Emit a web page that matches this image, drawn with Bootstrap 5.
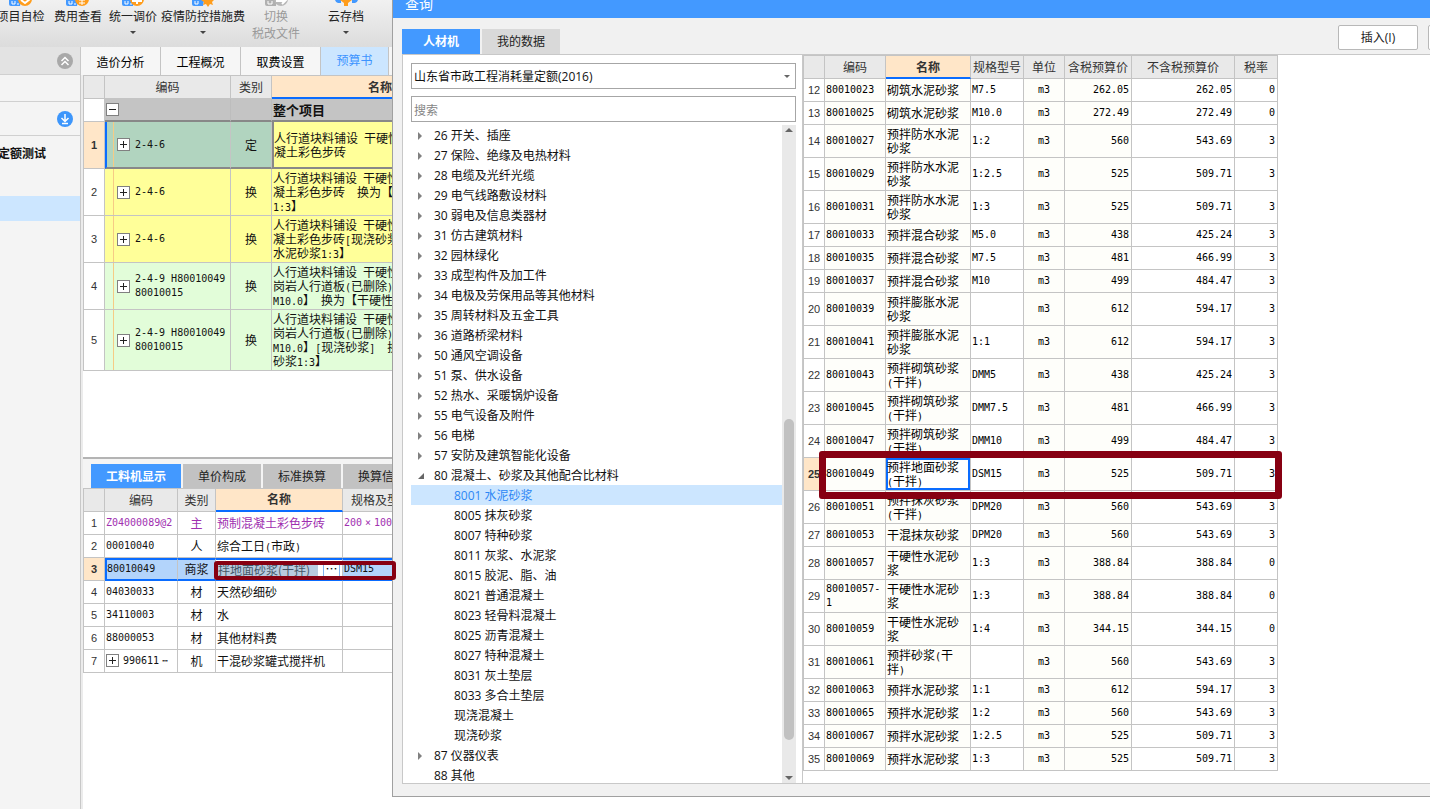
<!DOCTYPE html>
<html lang="zh-CN">
<head>
<meta charset="utf-8">
<meta name="viewport" content="width=device-width, initial-scale=1">
<title>查询</title>
<link rel="stylesheet" href="https://cdn.jsdelivr.net/npm/bootstrap@5.3.0/dist/css/bootstrap.min.css">
<style>
:root{--blue:#4399ff;--line:#c4c4c4;--strong:#0a6cff;--mark:#870012;--peach:#ffe6c8}
body{font-family:"Open Sans","Noto Sans CJK SC",sans-serif;font-size:12px;line-height:18px;color:#111;background:#fff}
button,input,select{font-family:inherit}
a{color:inherit;text-decoration:none}
.grid-table{font-family:"Noto Sans CJK SC",sans-serif}
.mo{font-family:"DejaVu Sans Mono",monospace;font-size:10px;line-height:10px}
.times{display:inline-block;width:12px;text-align:center}

/* ribbon */
.ribbon{height:47px;background:linear-gradient(#f1f1f1,#dcdcdc);overflow:hidden}
.ribbon-items{display:grid;grid-template-columns:57px 58px 52px 88px 58px 82px 54px;margin-left:-8px}
.tool{border:0;background:none;padding:0;font-size:12px;line-height:17px;white-space:nowrap;color:#222;display:flex;flex-direction:column;align-items:center}
.tool:disabled{color:#9a9a9a}
.tool svg:first-child{margin-bottom:1px}
.tool .drop{margin-top:6px}

/* left side bar */
.side{width:81px;flex:none;background:#f4f4f4;border-right:1px solid #c8c8c8}
.side-row{height:27px;border-bottom:1px solid #d0d0d0;padding-right:7px}
.side-row.head{background:#e3e3e3;height:28px}
.side-row.tall{height:34px}
.side-name{height:60px;padding-top:9px;font-weight:700;overflow:hidden;white-space:nowrap;margin-left:-2px}
.side-pick{height:25px;background:#cce6ff}

/* main area of the project window */
.main-area{background:#ececec;padding-left:2px}
.page-tabs{height:28px;background:#f6f6f6;margin-left:-2px}
.page-tabs button{border:0;border-right:1px solid #c4c4c4;background:#f6f6f6;width:80px;padding:4px 0 0;font-size:12px}
.page-tabs button.on{background:#cce6ff;color:#3c94ff;width:68px;padding:0}
.pane-top{flex:12 1 0;min-height:0;background:#fff;overflow:hidden}
.pane-low{flex:11 1 0;min-height:0;background:#fff;border-top:2px solid #b4b4b4}
.low-tabs{background:#f4f4f4;padding:5px 0 0 8px;height:29px;gap:2px}
.low-tabs button{border:0;background:#c2c2c2;color:#222;width:78px;height:24px;font-size:12px;padding:2px 0 0;white-space:nowrap}
.low-tabs button.on{background:var(--blue);color:#fff;font-weight:700;width:90px}

/* grids */
.grid-table{border-collapse:separate;border-spacing:0;table-layout:fixed;font-size:12px;line-height:14px;border-left:1px solid var(--line);border-top:1px solid var(--line);color:#111}
.grid-table th,.grid-table td{border-right:1px solid var(--line);border-bottom:1px solid var(--line);padding:0 1px;height:23px;vertical-align:middle;overflow:hidden}
.grid-table thead th{background:#e9e9e9;font-weight:400;text-align:center;color:#333;height:23px;padding:0;white-space:nowrap}
.grid-table thead th.now{background:var(--peach);font-weight:700;border-bottom:2px solid var(--strong)}
.grid-table tbody th{font:400 11px/14px "Liberation Sans",sans-serif;text-align:center;padding:0;color:#333;background:#fff}
.grid-table tbody th.now{background:var(--peach);font-weight:700}
.grid-table .code{font-family:"DejaVu Sans Mono",monospace;font-size:10px}
.box{width:13px;height:13px;flex:none;border:1px solid #808080;background:#fff;padding:0;display:block}
.box svg{display:block;margin:0 auto}

/* budget grid */
.budget{width:900px}
.budget .r3 td,.budget .r3 th{height:47px}
.budget .r4 td,.budget .r4 th{height:61px}
.budget .yellow td{background-color:#ffff99}
.budget .green td{background-color:#e2fdd9}
.budget .total td{background:#c4c4c4;border-right-color:#bdbdbd;font-size:13px;font-weight:700;border-bottom:2px solid #888}
.budget .picked td{background-color:#b1d4bf;border-bottom:2px solid #888}
.budget .picked td:nth-child(2){border-left:2px solid var(--strong);padding:0;background-position:6px 0}
.budget .picked td:nth-child(4){background:#ffff99;border-left:2px solid #888;padding:0}
.budget .node{background-image:linear-gradient(#f6cb85,#f6cb85);background-size:1px 100%;background-position:8px 0;background-repeat:no-repeat}
.budget .node>div{padding-left:11px;gap:5px}
.budget .picked .node>div{padding-left:10px;gap:5px}
.budget td.wrapped{white-space:nowrap}

/* resource grid */
.resource{width:500px}
.resource td{white-space:nowrap}
.resource .alt td{color:#a030b0}
.resource .live td{background:#b3d4fb;border-top:2px solid var(--strong);border-bottom:2px solid var(--strong)}
.resource .live td:nth-child(2){border-left:2px solid var(--strong);padding:0}
.resource .live td.edit{position:relative;overflow:visible;background:#fff;padding:0 2px}
.edit input{border:0;padding:0;width:100px;height:15px;font-size:12px;background:#b9cbdf;color:#456;font-family:"Noto Sans CJK SC",sans-serif}
.edit button{border:1px solid #7fb2ee;background:#fff;width:17px;height:15px;padding:0;line-height:8px;font-size:12px}
.ring{position:absolute;border:4px solid var(--mark);border-radius:3px;pointer-events:none}
.ring-low{left:-2px;top:1px;width:182px;height:19px;z-index:20}

/* query window */
.query{position:absolute;left:392px;right:0;top:0;bottom:12px;background:#f1f1f1;border-left:1px solid #a0a0a0;border-bottom:1px solid #a0a0a0;z-index:10;overflow:hidden}
.query-title{background:var(--blue);color:#fff;font-size:14px;line-height:18px;height:18px;padding-left:12px;flex:none;overflow:hidden}
.query-title span{display:block;margin-top:-5px}
.query-bar{height:36px;flex:none;padding-left:9px}
.query-tabs{gap:2px}
.query-tabs button{border:0;width:78px;height:25px;font-size:12px;background:#d9d9d9;color:#222;padding:0}
.query-tabs button.on{background:var(--blue);color:#fff;font-weight:700}
.query-btns{gap:10px;margin-right:-78px;padding-bottom:4px}
.query-btns .btn{width:80px;height:25px;padding:0;font-size:12px;line-height:20px;border:1px solid #b8b8b8;border-radius:2px;background:#fff;color:#222;flex:none}
.query-body{background:#fff;border-top:1px solid #c8c8c8;border-bottom:1px solid #c8c8c8;margin:0 0 12px 9px;min-height:0}
.lib{width:401px;flex:none;border-left:1px solid #c8c8c8;border-right:1px solid #c8c8c8;padding:8px 6px 0 8px}
.lib .form-select,.lib .form-control{height:26px;flex:none;border:1px solid #a6a6a6;border-radius:0;font-size:12px;line-height:18px;padding:2px 2px 0;color:#111}
.lib .form-select{margin-bottom:7px;background:#fff url("data:image/svg+xml,%3Csvg xmlns='http://www.w3.org/2000/svg' viewBox='0 0 6 3'%3E%3Cpath d='M0 0h6L3 3z' fill='%23666'/%3E%3C/svg%3E") no-repeat right 5px center/6px 3px}
.lib .form-control{margin-bottom:3px}
.lib .form-control::placeholder{color:#858585}
.tree{overflow:hidden;line-height:20px}
.tree a{display:flex;align-items:center;height:20px;padding:2px 0 0 6px}
.tree a::before{content:"";width:17px;flex:none}
.tree .shut::before{height:8px;background:linear-gradient(#808080,#808080) no-repeat;clip-path:polygon(1px 0,5px 4px,1px 8px);}
.tree .open::before{height:6px;background:#666;clip-path:polygon(7px 0,7px 6px,1px 6px)}
.tree .kid{padding-left:26px}
.tree .on{background:#cce6ff;color:#2c87f5}
.bar{width:14px;flex:none;background:#e9e9e9;padding:3px 0}
.bar .thumb{width:10px;flex:321 1 0;background:#c1c1c1;border-radius:5px}
.bar .before{flex:287 1 0}
.bar .after{flex:36 1 0}
.price{width:475px;line-height:14px}
.price td:nth-child(2),.price td:nth-child(n+4){font-family:"DejaVu Sans Mono",monospace;font-size:10px}
.price td:nth-child(2),.price td:nth-child(3),.price td:nth-child(5),.price td:nth-child(6){background:#fefefa}
.price td:nth-child(5){text-align:center}
.price td:nth-child(n+6){text-align:right;padding-right:2px}
.price td{color:#000;word-break:break-all}
.price .two td,.price .two th{height:33px}
.price tr.hit{position:relative}
.price .hit td:nth-child(3){box-shadow:inset 0 0 0 2px var(--strong);background:#fff}
.price .hit td:last-child{overflow:visible}
.ring-high{left:15px;right:-4px;top:-7px;bottom:-8px;border-width:7px}
</style>
</head>
<body class="vh-100 overflow-hidden position-relative">
<div class="d-flex flex-column h-100 overflow-hidden">
  <header class="ribbon flex-shrink-0">
    <div class="ribbon-items">
      <button class="tool" type="button"><svg width="24" height="7" viewBox="0 0 24 7"><path d="M0 0h12l-1 6H2Q0 6 0 4z" fill="#4399ff"/><path d="M3 1v3h3V1M8 4h2" stroke="#fff" fill="none"/><circle cx="16" cy="-1" r="7" fill="#ff9d1c"/><path d="M12 0l4 3 5-4" stroke="#fff" stroke-width="2" fill="none"/></svg>项目自检</button>
      <button class="tool" type="button"><svg width="24" height="7" viewBox="0 0 24 7"><path d="M0 0h12l-1 6H2Q0 6 0 4z" fill="#4399ff"/><path d="M3 1v3h3V1M8 4h2" stroke="#fff" fill="none"/><circle cx="16" cy="-1" r="7" fill="#ff9d1c"/><path d="M13 0h6M13 3h6M16 0v5" stroke="#fff" fill="none"/></svg>费用查看</button>
      <button class="tool" type="button"><svg width="24" height="7" viewBox="0 0 24 7"><path d="M1 0h12l-1 6H3Q1 6 1 4z" fill="#4399ff"/><path d="M4 1v3h3V1M9 4h2" stroke="#fff" fill="none"/><circle cx="16" cy="-1" r="7" fill="#ff9d1c"/><path d="M11 1h10M16 0v4" stroke="#fff" stroke-width="2" fill="none"/></svg>统一调价<svg class="drop" width="6" height="3" viewBox="0 0 6 3"><path d="M0 0h6L3 3z" fill="#444"/></svg></button>
      <button class="tool" type="button"><svg width="24" height="7" viewBox="0 0 24 7"><path d="M1 0h12l-1 6H3Q1 6 1 4z" fill="#4399ff"/><path d="M4 1v3h3V1" stroke="#fff" fill="none"/><path d="M10 0h13l-2 2 1 3-3-1-2 3-2-3-3 1 1-3z" fill="#ff9d1c"/></svg>疫情防控措施费<svg class="drop" width="6" height="3" viewBox="0 0 6 3"><path d="M0 0h6L3 3z" fill="#444"/></svg></button>
      <button class="tool" type="button" disabled><svg width="24" height="7" viewBox="0 0 24 7"><path d="M1 0h11v6H3Q1 6 1 4z" fill="#b0b0b0"/><path d="M4 1v3h4V1" stroke="#fff" fill="none"/><circle cx="17" cy="-1" r="7" fill="#b8b8b8"/><path d="M12 1h9l-3 3" stroke="#fff" stroke-width="2" fill="none"/></svg>切换<span>税改文件</span></button>
      <button class="tool" type="button"><svg width="24" height="7" viewBox="0 0 24 7"><path d="M1 0h6v3H4Q2 3 1 0zM18 0h6q-1 3-3 3h-3z" fill="#4399ff"/><path d="M6 0h12l-4 3v3h-4V3z" fill="#ff9d1c"/></svg>云存档<svg class="drop" width="6" height="3" viewBox="0 0 6 3"><path d="M0 0h6L3 3z" fill="#444"/></svg></button>
    </div>
  </header>
  <div class="d-flex flex-grow-1 overflow-hidden">
    <aside class="side">
      <div class="side-row head d-flex align-items-center justify-content-end"><svg width="16" height="16" viewBox="0 0 16 16"><circle cx="8" cy="8" r="8" fill="#a9a9a9"/><path d="M4.500 8L8 4.500 11.500 8M4.500 12L8 8.500l3.500 3.500" stroke="#fff" stroke-width="1.500" fill="none"/></svg></div>
      <div class="side-row"></div>
      <div class="side-row tall d-flex align-items-center justify-content-end"><svg width="16" height="16" viewBox="0 0 16 16"><circle cx="8" cy="8" r="8" fill="#3d96fb"/><path d="M8 3v7M4.500 7L8 10.500 11.500 7M5 12.500h6" stroke="#fff" stroke-width="1.500" fill="none"/></svg></div>
      <div class="side-name">定额测试</div>
      <div class="side-pick"></div>
    </aside>
    <main class="main-area flex-grow-1 d-flex flex-column">
      <nav class="page-tabs d-flex flex-shrink-0"><button type="button">造价分析</button><button type="button">工程概况</button><button type="button">取费设置</button><button type="button" class="on">预算书</button></nav>
      <section class="pane-top">
        <table class="grid-table budget">
          <colgroup><col style="width:21px"><col style="width:126px"><col style="width:41px"><col></colgroup>
          <thead><tr><th></th><th>编码</th><th>类别</th><th class="now text-start"><div class="ps-5 ms-5">名称</div></th></tr></thead>
          <tbody>
            <tr class="total"><th></th><td><button class="box" type="button" aria-label="收起"><svg width="11" height="11"><path d="M2 5.500h7" stroke="#222"/></svg></button></td><td></td><td>整个项目</td></tr>
            <tr class="r3 picked"><th class="now">1</th><td class="node code"><div class="d-flex align-items-center"><button class="box" type="button" aria-label="展开"><svg width="11" height="11"><path d="M2 5.500h7M5.500 2v7" stroke="#222"/></svg></button><span>2-4-6</span></div></td><td class="text-center">定</td><td class="wrapped">人行道块料铺设<span class="mo"> </span>干硬性<br>凝土彩色步砖</td></tr>
            <tr class="r3 yellow"><th>2</th><td class="node code"><div class="d-flex align-items-center"><button class="box" type="button" aria-label="展开"><svg width="11" height="11"><path d="M2 5.500h7M5.500 2v7" stroke="#222"/></svg></button><span>2-4-6</span></div></td><td class="text-center">换</td><td class="wrapped">人行道块料铺设<span class="mo"> </span>干硬性<br>凝土彩色步砖&#12288;换为【<br><span class="mo">1:3</span>】</td></tr>
            <tr class="r3 yellow"><th>3</th><td class="node code"><div class="d-flex align-items-center"><button class="box" type="button" aria-label="展开"><svg width="11" height="11"><path d="M2 5.500h7M5.500 2v7" stroke="#222"/></svg></button><span>2-4-6</span></div></td><td class="text-center">换</td><td class="wrapped">人行道块料铺设<span class="mo"> </span>干硬性<br>凝土彩色步砖<span class="mo">[</span>现浇砂浆<br>水泥砂浆<span class="mo">1:3</span>】</td></tr>
            <tr class="r3 green"><th>4</th><td class="node code"><div class="d-flex align-items-center"><button class="box" type="button" aria-label="展开"><svg width="11" height="11"><path d="M2 5.500h7M5.500 2v7" stroke="#222"/></svg></button><span>2-4-9 H80010049<br>80010015</span></div></td><td class="text-center">换</td><td class="wrapped">人行道块料铺设<span class="mo"> </span>干硬性<br>岗岩人行道板<span class="mo">(</span>已删除<span class="mo">)</span><br><span class="mo">M10.0</span>】&#12288;换为【干硬性</td></tr>
            <tr class="r4 green"><th>5</th><td class="node code"><div class="d-flex align-items-center"><button class="box" type="button" aria-label="展开"><svg width="11" height="11"><path d="M2 5.500h7M5.500 2v7" stroke="#222"/></svg></button><span>2-4-9 H80010049<br>80010015</span></div></td><td class="text-center">换</td><td class="wrapped">人行道块料铺设<span class="mo"> </span>干硬性<br>岗岩人行道板<span class="mo">(</span>已删除<span class="mo">)</span><br><span class="mo">M10.0</span>】<span class="mo">[</span>现浇砂浆<span class="mo">]</span>&#12288;换<br>砂浆<span class="mo">1:3</span>】</td></tr>
          </tbody>
        </table>
      </section>
      <section class="pane-low">
        <nav class="low-tabs d-flex"><button type="button" class="on">工料机显示</button><button type="button">单价构成</button><button type="button">标准换算</button><button type="button">换算信息</button></nav>
        <table class="grid-table resource">
          <colgroup><col style="width:21px"><col style="width:73px"><col style="width:38px"><col style="width:127px"><col></colgroup>
          <thead><tr><th></th><th>编码</th><th>类别</th><th class="now">名称</th><th class="text-start ps-2">规格及型号</th></tr></thead>
          <tbody>
            <tr class="alt"><th>1</th><td class="code">Z04000089@2</td><td class="text-center">主</td><td>预制混凝土彩色步砖</td><td class="code">200<span class="times">×</span>100</td></tr>
            <tr><th>2</th><td class="code">00010040</td><td class="text-center">人</td><td>综合工日<span class="mo">(</span>市政<span class="mo">)</span></td><td></td></tr>
            <tr class="live"><th class="now">3</th><td class="code">80010049</td><td class="text-center">商浆</td><td class="edit"><div class="d-flex justify-content-between"><input aria-label="名称" value="拌地面砂浆(干拌)"><button type="button" aria-label="选择">⋯</button></div><span class="ring ring-low"></span></td><td class="code">DSM15</td></tr>
            <tr><th>4</th><td class="code">04030033</td><td class="text-center">材</td><td>天然砂细砂</td><td></td></tr>
            <tr><th>5</th><td class="code">34110003</td><td class="text-center">材</td><td>水</td><td></td></tr>
            <tr><th>6</th><td class="code">88000053</td><td class="text-center">材</td><td>其他材料费</td><td></td></tr>
            <tr><th>7</th><td class="code"><div class="d-flex align-items-center gap-1"><button class="box" type="button" aria-label="展开"><svg width="11" height="11"><path d="M2 5.500h7M5.500 2v7" stroke="#222"/></svg></button><span>990611<span class="times">⋯</span></span></div></td><td class="text-center">机</td><td>干混砂浆罐式搅拌机</td><td></td></tr>
          </tbody>
        </table>
      </section>
    </main>
  </div>
</div>

<div class="query d-flex flex-column" role="dialog" aria-label="查询">
  <div class="query-title"><span>查询</span></div>
  <div class="query-bar d-flex justify-content-between">
    <div class="query-tabs d-flex align-items-end"><button type="button" class="on">人材机</button><button type="button">我的数据</button></div>
    <div class="query-btns d-flex align-items-end"><button type="button" class="btn">插入(I)</button><button type="button" class="btn" aria-label="替换"></button></div>
  </div>
  <div class="query-body d-flex flex-grow-1">
    <div class="lib d-flex flex-column">
      <select class="form-select" aria-label="定额库"><option>山东省市政工程消耗量定额(2016)</option></select>
      <input class="form-control" type="search" placeholder="搜索" aria-label="搜索">
      <div class="d-flex flex-grow-1 overflow-hidden">
        <ul class="tree list-unstyled mb-0 flex-grow-1">
          <li><a href="#" class="shut">26 开关、插座</a></li>
          <li><a href="#" class="shut">27 保险、绝缘及电热材料</a></li>
          <li><a href="#" class="shut">28 电缆及光纤光缆</a></li>
          <li><a href="#" class="shut">29 电气线路敷设材料</a></li>
          <li><a href="#" class="shut">30 弱电及信息类器材</a></li>
          <li><a href="#" class="shut">31 仿古建筑材料</a></li>
          <li><a href="#" class="shut">32 园林绿化</a></li>
          <li><a href="#" class="shut">33 成型构件及加工件</a></li>
          <li><a href="#" class="shut">34 电极及劳保用品等其他材料</a></li>
          <li><a href="#" class="shut">35 周转材料及五金工具</a></li>
          <li><a href="#" class="shut">36 道路桥梁材料</a></li>
          <li><a href="#" class="shut">50 通风空调设备</a></li>
          <li><a href="#" class="shut">51 泵、供水设备</a></li>
          <li><a href="#" class="shut">52 热水、采暖锅炉设备</a></li>
          <li><a href="#" class="shut">55 电气设备及附件</a></li>
          <li><a href="#" class="shut">56 电梯</a></li>
          <li><a href="#" class="shut">57 安防及建筑智能化设备</a></li>
          <li><a href="#" class="open">80 混凝土、砂浆及其他配合比材料</a>
            <ul class="list-unstyled">
              <li><a href="#" class="kid on">8001 水泥砂浆</a></li>
              <li><a href="#" class="kid">8005 抹灰砂浆</a></li>
              <li><a href="#" class="kid">8007 特种砂浆</a></li>
              <li><a href="#" class="kid">8011 灰浆、水泥浆</a></li>
              <li><a href="#" class="kid">8015 胶泥、脂、油</a></li>
              <li><a href="#" class="kid">8021 普通混凝土</a></li>
              <li><a href="#" class="kid">8023 轻骨料混凝土</a></li>
              <li><a href="#" class="kid">8025 沥青混凝土</a></li>
              <li><a href="#" class="kid">8027 特种混凝土</a></li>
              <li><a href="#" class="kid">8031 灰土垫层</a></li>
              <li><a href="#" class="kid">8033 多合土垫层</a></li>
              <li><a href="#" class="kid">现浇混凝土</a></li>
              <li><a href="#" class="kid">现浇砂浆</a></li>
            </ul></li>
          <li><a href="#" class="shut">87 仪器仪表</a></li>
          <li><a href="#">88 其他</a></li>
        </ul>
        <div class="bar d-flex flex-column align-items-center">
          <svg class="flex-shrink-0" width="8" height="4" viewBox="0 0 8 4"><path d="M0 4h8L4 0z" fill="#666"/></svg>
          <div class="before"></div><div class="thumb"></div><div class="after"></div>
          <svg class="flex-shrink-0" width="8" height="4" viewBox="0 0 8 4"><path d="M0 0h8L4 4z" fill="#666"/></svg>
        </div>
      </div>
    </div>
    <div class="flex-grow-1 overflow-hidden">
      <table class="grid-table price">
        <colgroup><col style="width:21px"><col style="width:61px"><col style="width:85px"><col style="width:53px"><col style="width:41px"><col style="width:67px"><col style="width:103px"><col style="width:43px"></colgroup>
        <thead><tr><th></th><th>编码</th><th class="now">名称</th><th>规格型号</th><th>单位</th><th>含税预算价</th><th>不含税预算价</th><th>税率</th></tr></thead>
        <tbody>
          <tr><th>12</th><td>80010023</td><td>砌筑水泥砂浆</td><td>M7.5</td><td>m3</td><td>262.05</td><td>262.05</td><td>0</td></tr>
          <tr><th>13</th><td>80010025</td><td>砌筑水泥砂浆</td><td>M10.0</td><td>m3</td><td>272.49</td><td>272.49</td><td>0</td></tr>
          <tr class="two"><th>14</th><td>80010027</td><td>预拌防水水泥<br>砂浆</td><td>1:2</td><td>m3</td><td>560</td><td>543.69</td><td>3</td></tr>
          <tr class="two"><th>15</th><td>80010029</td><td>预拌防水水泥<br>砂浆</td><td>1:2.5</td><td>m3</td><td>525</td><td>509.71</td><td>3</td></tr>
          <tr class="two"><th>16</th><td>80010031</td><td>预拌防水水泥<br>砂浆</td><td>1:3</td><td>m3</td><td>525</td><td>509.71</td><td>3</td></tr>
          <tr><th>17</th><td>80010033</td><td>预拌混合砂浆</td><td>M5.0</td><td>m3</td><td>438</td><td>425.24</td><td>3</td></tr>
          <tr><th>18</th><td>80010035</td><td>预拌混合砂浆</td><td>M7.5</td><td>m3</td><td>481</td><td>466.99</td><td>3</td></tr>
          <tr><th>19</th><td>80010037</td><td>预拌混合砂浆</td><td>M10</td><td>m3</td><td>499</td><td>484.47</td><td>3</td></tr>
          <tr class="two"><th>20</th><td>80010039</td><td>预拌膨胀水泥<br>砂浆</td><td></td><td>m3</td><td>612</td><td>594.17</td><td>3</td></tr>
          <tr class="two"><th>21</th><td>80010041</td><td>预拌膨胀水泥<br>砂浆</td><td>1:1</td><td>m3</td><td>612</td><td>594.17</td><td>3</td></tr>
          <tr class="two"><th>22</th><td>80010043</td><td>预拌砌筑砂浆<br><span class="mo">(</span>干拌<span class="mo">)</span></td><td>DMM5</td><td>m3</td><td>438</td><td>425.24</td><td>3</td></tr>
          <tr class="two"><th>23</th><td>80010045</td><td>预拌砌筑砂浆<br><span class="mo">(</span>干拌<span class="mo">)</span></td><td>DMM7.5</td><td>m3</td><td>481</td><td>466.99</td><td>3</td></tr>
          <tr class="two"><th>24</th><td>80010047</td><td>预拌砌筑砂浆<br><span class="mo">(</span>干拌<span class="mo">)</span></td><td>DMM10</td><td>m3</td><td>499</td><td>484.47</td><td>3</td></tr>
          <tr class="two hit"><th class="now">25</th><td>80010049</td><td>预拌地面砂浆<br><span class="mo">(</span>干拌<span class="mo">)</span></td><td>DSM15</td><td>m3</td><td>525</td><td>509.71</td><td>3<span class="ring ring-high"></span></td></tr>
          <tr class="two"><th>26</th><td>80010051</td><td>预拌抹灰砂浆<br><span class="mo">(</span>干拌<span class="mo">)</span></td><td>DPM20</td><td>m3</td><td>560</td><td>543.69</td><td>3</td></tr>
          <tr><th>27</th><td>80010053</td><td>干混抹灰砂浆</td><td>DPM20</td><td>m3</td><td>560</td><td>543.69</td><td>3</td></tr>
          <tr class="two"><th>28</th><td>80010057</td><td>干硬性水泥砂<br>浆</td><td>1:3</td><td>m3</td><td>388.84</td><td>388.84</td><td>0</td></tr>
          <tr class="two"><th>29</th><td>80010057-<br>1</td><td>干硬性水泥砂<br>浆</td><td>1:3</td><td>m3</td><td>388.84</td><td>388.84</td><td>0</td></tr>
          <tr class="two"><th>30</th><td>80010059</td><td>干硬性水泥砂<br>浆</td><td>1:4</td><td>m3</td><td>344.15</td><td>344.15</td><td>0</td></tr>
          <tr class="two"><th>31</th><td>80010061</td><td>预拌砂浆<span class="mo">(</span>干<br>拌<span class="mo">)</span></td><td></td><td>m3</td><td>560</td><td>543.69</td><td>3</td></tr>
          <tr><th>32</th><td>80010063</td><td>预拌水泥砂浆</td><td>1:1</td><td>m3</td><td>612</td><td>594.17</td><td>3</td></tr>
          <tr><th>33</th><td>80010065</td><td>预拌水泥砂浆</td><td>1:2</td><td>m3</td><td>560</td><td>543.69</td><td>3</td></tr>
          <tr><th>34</th><td>80010067</td><td>预拌水泥砂浆</td><td>1:2.5</td><td>m3</td><td>525</td><td>509.71</td><td>3</td></tr>
          <tr><th>35</th><td>80010069</td><td>预拌水泥砂浆</td><td>1:3</td><td>m3</td><td>525</td><td>509.71</td><td>3</td></tr>
        </tbody>
      </table>
    </div>
  </div>
</div>
<script src="https://cdn.jsdelivr.net/npm/bootstrap@5.3.0/dist/js/bootstrap.bundle.min.js"></script>
</body>
</html>
